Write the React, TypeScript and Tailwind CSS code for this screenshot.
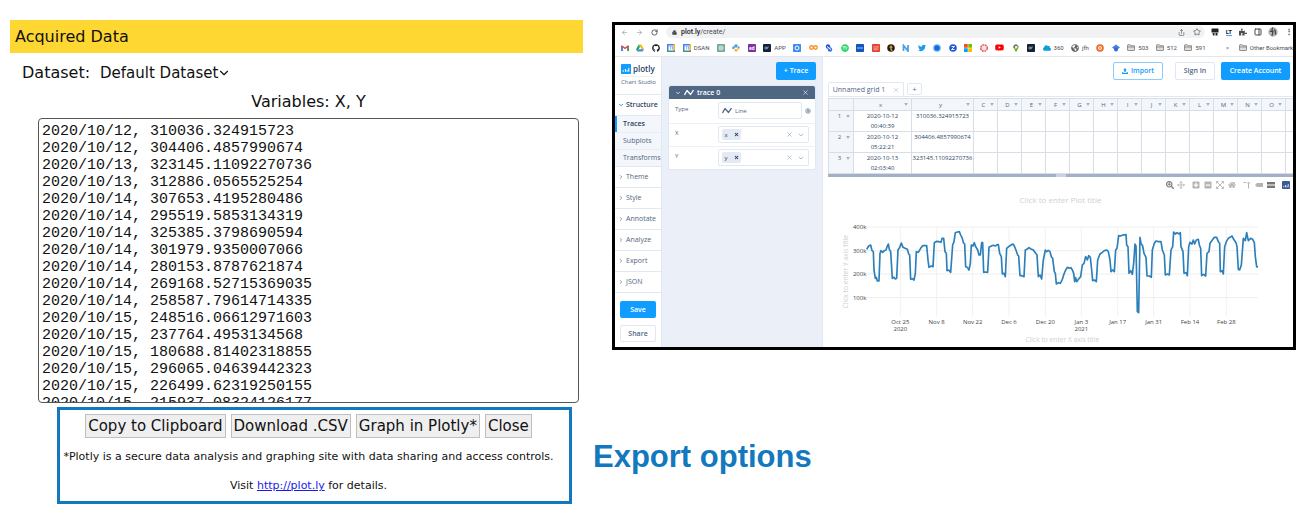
import type { ReactNode } from "react";
import { ChevronDown, ChevronRight, X, ArrowLeft, ArrowRight, RotateCw, Lock, Share, Star, Settings, Move, PanelRight } from "lucide-react";
import { FaGithub, FaSpotify, FaTwitter, FaYoutube, FaPython, FaPuzzlePiece, FaCloud, FaHome, FaSearchPlus, FaPlusSquare, FaMinusSquare, FaGlobeAmericas } from "react-icons/fa";

const rows = `2020/10/12, 310036.324915723
2020/10/12, 304406.4857990674
2020/10/13, 323145.11092270736
2020/10/13, 312886.0565525254
2020/10/14, 307653.4195280486
2020/10/14, 295519.5853134319
2020/10/14, 325385.3798690594
2020/10/14, 301979.9350007066
2020/10/14, 280153.8787621874
2020/10/14, 269168.52715369035
2020/10/14, 258587.79614714335
2020/10/15, 248516.06612971603
2020/10/15, 237764.4953134568
2020/10/15, 180688.81402318855
2020/10/15, 296065.04639442323
2020/10/15, 226499.62319250155
2020/10/15, 215937.08324126177`;

function Tile({ color, children }: { color: string; children?: ReactNode }) {
  return (
    <svg viewBox="0 0 16 16" className="size-2 shrink-0">
      <rect width="16" height="16" rx="1.5" fill={color} />
      {children}
    </svg>
  );
}

function Gmail() {
  return (
    <svg viewBox="0 0 16 16" className="size-2 shrink-0">
      <path d="M0 4v10h3.500V7L8 10.500 12.500 7v7H16V4l-2-1.500L8 7 2 2.500z" fill="#ea4335" />
      <path d="M0 4.500V14h3.500V7z" fill="#4285f4" />
      <path d="M16 4.500V14h-3.500V7z" fill="#34a853" />
    </svg>
  );
}

function Drive() {
  return (
    <svg viewBox="0 0 16 16" className="size-2 shrink-0">
      <path d="M5.500 1h5L16 10h-5z" fill="#fbbc04" />
      <path d="M5.500 1L8 5.500 2.700 15 0 10.500z" fill="#1fa463" />
      <path d="M5.500 10.500H16L13.300 15H2.700z" fill="#4285f4" />
    </svg>
  );
}

function Calendar() {
  return (
    <svg viewBox="0 0 16 16" className="size-2 shrink-0">
      <rect width="16" height="16" rx="1" fill="#3f7fee" />
      <path d="M13 0h2a1 1 0 0 1 1 1v12h-3z" fill="#fbbc04" />
      <path d="M0 13h13v3H1a1 1 0 0 1-1-1z" fill="#34a853" />
      <path d="M13 13h3l-3 3z" fill="#ea4335" />
      <rect x="3" y="3" width="10" height="10" fill="#fff" />
      <path d="M5 5h2.500v6M9 5h2v6" stroke="#3f7fee" strokeWidth="1.200" fill="none" />
    </svg>
  );
}

function Folder() {
  return (
    <svg viewBox="0 0 16 14" className="h-[7px] w-2 shrink-0" fill="#dedede" stroke="#7b7b7b" strokeWidth="1.600">
      <path d="M1 2.500V12a1 1 0 0 0 1 1h12a1 1 0 0 0 1-1V3.500H8L6.500 1.500H2a1 1 0 0 0-1 1zM1 6h14" />
    </svg>
  );
}

function Dot({ color, children }: { color: string; children?: ReactNode }) {
  return (
    <svg viewBox="0 0 16 16" className="size-2 shrink-0">
      <circle cx="8" cy="8" r="7.500" fill={color} />
      {children}
    </svg>
  );
}

function Bookmark({ icon, label }: { icon: ReactNode; label?: string }) {
  return (
    <a href="#" className="flex items-center gap-[3px] whitespace-nowrap">
      {icon}
      {label && <span>{label}</span>}
    </a>
  );
}

function AppTile() {
  return (
    <Tile color="#14213d">
      <path d="M4 6h3v4H4zM9 10V6h3" stroke="#b8c4dc" strokeWidth="1.200" fill="none" />
    </Tile>
  );
}

function Browser() {
  return (
    <header className="border-b border-[#e4e6e9] font-[Roboto,sans-serif] text-[#4a4d51]">
      <div className="flex h-[14px] items-center pl-1.5">
        <div className="flex w-[45px] shrink-0 items-center gap-2">
          <ArrowLeft className="size-[7px] text-[#a2a4a8]" strokeWidth={2.5} />
          <ArrowRight className="size-[7px] text-[#a2a4a8]" strokeWidth={2.5} />
          <RotateCw className="size-[7px]" strokeWidth={3} />
        </div>
        <div className="flex h-3 flex-1 items-center rounded-full bg-[#f1f2f4] pr-1 pl-1.5 text-[7px]">
          <Lock className="mr-1 size-[5px]" fill="currentColor" strokeWidth={3} />
          <span className="flex-1"><span className="font-medium text-[#202124]">plot.ly</span>/create/</span>
          <Share className="mr-2 size-[7px]" />
          <Star className="size-[8px]" />
        </div>
        <div className="flex w-[88px] shrink-0 items-center justify-between pl-1.5">
          <svg viewBox="0 0 16 16" className="size-2"><path d="M2 1h12a1 1 0 0 1 1 1v7H1V2a1 1 0 0 1 1-1zM3 10h4v5H4zM9 10h4v5H9z" fill="#222" /></svg>
          <span className="border-b border-[#44a3ff] text-[6px] leading-[6px] font-bold text-[#222]">LT</span>
          <FaPuzzlePiece className="size-2" />
          <PanelRight className="size-2" strokeWidth={3} />
          <svg viewBox="0 0 16 16" className="size-2.5"><circle cx="8" cy="8" r="7.500" fill="#b3b3b3" /><path d="M8 1c-5 4 3 7-2 13M10 4c4 3 0 6 3 8M3 7h6" stroke="#444" strokeWidth="2" fill="none" /></svg>
          <span className="text-[8px] font-bold">⋮</span>
        </div>
      </div>
      <nav aria-label="Bookmarks" className="flex h-[17px] items-center pl-1.5 text-[6px]">
        <div className="flex w-[585px] shrink-0 items-center justify-between">
          <Bookmark icon={<Gmail />} />
          <Bookmark icon={<Drive />} />
          <Bookmark icon={<FaGithub className="size-2 text-[#191919]" />} />
          <Bookmark icon={<Calendar />} />
          <Bookmark icon={<Calendar />} label="DSAN" />
          <Bookmark icon={<Tile color="#75ac9d"><circle cx="8" cy="8" r="4" fill="none" stroke="#fff" strokeWidth="1.500" /><path d="M5 5l6 6M11 5l-6 6" stroke="#fff" /></Tile>} />
          <Bookmark
            icon={
              <svg viewBox="0 0 16 16" className="size-2">
                <path d="M5 1h6v6H5v2H1V5h4z" fill="#4b96dc" />
                <path d="M11 15H5V10h6V7h4v4h-4z" fill="#f4b942" />
                <path d="M1 7h3v3H1zM12 5h3v3h-3z" fill="#4b96dc" />
              </svg>
            }
          />
          <Bookmark icon={<Tile color="#7b2fa0"><text x="2" y="12" fontSize="10" fontWeight="700" fill="#fff">ed</text></Tile>} />
          <Bookmark icon={<AppTile />} label="APP" />
          <Bookmark icon={<Tile color="#3d8bf2"><circle cx="8" cy="8" r="4" fill="none" stroke="#fff" strokeWidth="2" /></Tile>} />
          <Bookmark icon={<svg viewBox="0 0 18 16" className="size-[9px]"><g fill="none" stroke="#f5942b" strokeWidth="2.800"><circle cx="5" cy="8" r="3.500" /><circle cx="13" cy="8" r="3.500" /></g></svg>} />
          <Bookmark icon={<svg viewBox="0 0 16 16" className="size-2"><circle cx="6" cy="5" r="4.500" fill="#2456c9" /><circle cx="10" cy="11" r="4.500" fill="#3b6fe0" /><path d="M4 5l8 6" stroke="#fff" strokeWidth="2" /></svg>} />
          <Bookmark icon={<FaSpotify className="size-2 text-[#1ed760]" />} />
          <Bookmark icon={<Tile color="#1356b8"><path d="M2 8h12" stroke="#9bc8ff" strokeWidth="2" /></Tile>} />
          <Bookmark icon={<Tile color="#e44332"><path d="M3 5l4 1 6-2M3 8l4 1 6-2M3 11l4 1 6-2" stroke="#fff" fill="none" /></Tile>} />
          <Bookmark icon={<Dot color="#1d1d1b"><path d="M8 3v8q0 2 3 1M5 6h6" stroke="#f7a823" strokeWidth="2.500" fill="none" /></Dot>} />
          <Bookmark icon={<svg viewBox="0 0 16 16" className="size-2"><path d="M3 14V3l9 11V2" stroke="#4aa0e6" strokeWidth="3.500" fill="none" /></svg>} />
          <Bookmark icon={<FaTwitter className="size-2 text-[#1d9bf0]" />} />
          <Bookmark icon={<Dot color="#5aa9f7"><circle cx="8" cy="8" r="5" fill="#1668d8" /></Dot>} />
          <Bookmark icon={<Dot color="#2057d8"><path d="M5 5h6l-6 6h6" stroke="#fff" strokeWidth="1.800" fill="none" /></Dot>} />
          <Bookmark icon={<svg viewBox="0 0 16 16" className="size-2"><path d="M0 0h7.500v7.500H0z" fill="#f25022" /><path d="M8.500 0H16v7.500H8.500z" fill="#7fba00" /><path d="M0 8.500h7.500V16H0z" fill="#00a4ef" /><path d="M8.500 8.500H16V16H8.500z" fill="#ffb900" /></svg>} />
          <Bookmark icon={<svg viewBox="0 0 16 16" className="size-2"><circle cx="8" cy="8" r="6.500" fill="none" stroke="#e2352b" strokeWidth="2.500" strokeDasharray="4 1.200" /><circle cx="8" cy="8" r="3" fill="none" stroke="#f3a5a0" /></svg>} />
          <Bookmark icon={<FaYoutube className="size-[9px] text-[#f00]" />} />
          <Bookmark icon={<svg viewBox="0 0 16 16" className="size-2"><path d="M8 16L4 9a5 5 0 1 1 8 0z" fill="#34a853" /><path d="M3 6a5 5 0 0 1 7-5L5 8z" fill="#4285f4" /><path d="M3 6l3-4 2 3-4 4z" fill="#ea4335" /><path d="M4 9l6-5 2 4-6 3z" fill="#fbbc04" /><circle cx="8" cy="6" r="2" fill="#fff" /></svg>} />
          <Bookmark icon={<AppTile />} />
          <Bookmark icon={<FaCloud className="size-2 text-[#0d9dda]" />} label="360" />
          <Bookmark icon={<FaGlobeAmericas className="size-2 text-[#5f6368]" />} label="jfh" />
          <Bookmark icon={<Dot color="#f26b21"><circle cx="8" cy="8" r="3" fill="none" stroke="#fff" strokeWidth="2" /></Dot>} />
          <Bookmark icon={<svg viewBox="0 0 16 16" className="size-2"><path d="M8 1l8 6-8 6-8-6z" fill="#4480f0" /><circle cx="8" cy="11" r="4" fill="#3367d6" /></svg>} />
          <Bookmark icon={<Folder />} label="503" />
          <Bookmark icon={<Folder />} label="512" />
          <Bookmark icon={<Folder />} label="591" />
        </div>
        <div className="ml-auto flex w-[67px] shrink-0 items-center gap-[5px]">
          <span>»</span>
          <span className="h-2 w-px bg-[#d5d7da]" />
          <Bookmark icon={<Folder />} label="Other Bookmarks" />
        </div>
      </nav>
    </header>
  );
}

function PlotlyMark({ className }: { className: string }) {
  return (
    <svg viewBox="0 0 18 18" className={className}>
      <rect width="18" height="18" rx="1" fill="currentColor" />
      <path d="M4 14v-3M8 14V9M11 14v-3M14 14V7" stroke="#fff" strokeWidth="1.800" />
    </svg>
  );
}

function SideItem({ label }: { label: string }) {
  return (
    <button className="flex h-[21px] w-full items-center gap-0.5 border-b border-[#dfe8f3] pl-[3px] text-left">
      <ChevronRight className="size-[6px]" strokeWidth={2.5} />
      {label}
    </button>
  );
}

function Sidebar() {
  return (
    <aside className="w-[47px] shrink-0 border-r border-[#dfe8f3] text-[7px] leading-[10px] text-[#506784]">
      <div className="flex h-[38px] flex-col justify-center border-b border-[#dfe8f3] pl-1.5">
        <div className="flex items-center gap-0.5">
          <PlotlyMark className="size-[10px] text-[#119dff]" />
          <span className="text-[8px] font-semibold text-[#2a3f5f]">plotly</span>
        </div>
        <div className="mt-0.5 mr-1.5 border-t border-[#eef2f7] pt-px text-[6px] leading-[9px] whitespace-nowrap">Chart Studio</div>
      </div>
      <button className="flex h-[21px] w-full items-center gap-0.5 border-b border-[#dfe8f3] pl-[3px] font-semibold text-[#2a3f5f]">
        <ChevronDown className="size-[6px] text-[#119dff]" strokeWidth={4} />
        Structure
      </button>
      <div className="flex h-[51px] flex-col border-b border-[#dfe8f3] bg-[#f3f6fa]">
        <button className="flex-1 border-l-2 border-[#119dff] pl-1.5 text-left font-semibold text-[#2a3f5f]">Traces</button>
        <button className="flex-1 border-y border-[#e6edf5] pl-2 text-left">Subplots</button>
        <button className="flex-1 pl-2 text-left">Transforms</button>
      </div>
      <SideItem label="Theme" />
      <SideItem label="Style" />
      <SideItem label="Annotate" />
      <SideItem label="Analyze" />
      <SideItem label="Export" />
      <SideItem label="JSON" />
      <div className="flex flex-col gap-[7px] px-[5px] pt-2 pb-[5px] font-semibold">
        <button className="h-[17px] rounded-xs bg-[#119dff] text-white">Save</button>
        <button className="h-[17px] rounded-xs border border-[#dfe8f3]">Share</button>
      </div>
    </aside>
  );
}

function LineIcon() {
  return (
    <svg viewBox="0 0 20 14" className="h-[7px] w-2.5 shrink-0" fill="none" stroke="currentColor" strokeWidth="2.600">
      <path d="M1 12L6 3l7 8 6-9" strokeLinejoin="round" />
    </svg>
  );
}

function AxisField({ label, value }: { label: string; value: string }) {
  return (
    <div className="flex h-[23px] border-t border-[#edf1f7] pt-[2px] pr-1.5 pl-1.5">
      <span className="w-[43px] pt-0.5 text-[6px]">{label}</span>
      <div className="flex h-[17px] flex-1 items-center gap-1 rounded-xs border border-[#dfe8f3] px-[3px]">
        <button aria-label={"Remove " + value} className="flex h-[11px] w-[19px] items-center justify-center gap-1.5 rounded-xs bg-[#e3eaf4] text-[6px] text-[#2a3f5f]">
          {value}
          <X className="size-[5px]" strokeWidth={5} />
        </button>
        <X className="ml-auto size-[7px] text-[#a2b1c6]" strokeWidth={2.5} />
        <ChevronDown className="size-2 text-[#a2b1c6]" strokeWidth={2.5} />
      </div>
    </div>
  );
}

function TracePanel() {
  return (
    <section className="flex w-[161px] shrink-0 flex-col border-r border-[#dfe8f3] bg-[#ebf0f8] px-1.5 pt-[5px] text-[7px] leading-[10px] text-[#506784]">
      <button className="h-[18px] w-10 self-end rounded-xs bg-[#119dff] font-semibold text-white">+ Trace</button>
      <div className="mt-[5px] rounded-xs border border-[#dfe8f3] bg-white">
        <div className="flex h-[13px] items-center gap-[3px] rounded-t-xs bg-[#506784] px-1.5 font-semibold text-white">
          <ChevronDown className="size-[6px]" strokeWidth={3} />
          <LineIcon />
          trace 0
          <X className="ml-auto size-[7px]" />
        </div>
        <div className="flex h-6 pt-[3px] pr-1 pl-1.5">
          <span className="w-[43px] pt-0.5 text-[6px]">Type</span>
          <div className="flex h-[17px] flex-1 items-center gap-[3px] rounded-xs border border-[#dfe8f3] px-[3px] text-[6px]">
            <LineIcon />
            Line
          </div>
          <Settings className="mt-1.5 ml-[3px] size-[6px] text-[#7f92ab]" strokeWidth={4} />
        </div>
        <AxisField label="X" value="x" />
        <AxisField label="Y" value="y" />
      </div>
    </section>
  );
}

const letters = ["C", "D", "E", "F", "G", "H", "I", "J", "K", "L", "M", "N", "O"];
const records = [
  ["2020-10-12", "00:40:39", "310036.324915723"],
  ["2020-10-12", "05:22:21", "304406.4857990674"],
  ["2020-10-13", "02:03:40", "323145.11092270736"],
];

function Caret() {
  return (
    <svg viewBox="0 0 6 5" className="h-[3px] w-1 shrink-0">
      <path d="M0 0h6L3 5z" fill="#a2b1c6" />
    </svg>
  );
}

function HeadCell({ name }: { name: string }) {
  return (
    <th className="border border-[#d9dee6] p-0 font-normal">
      <div className="flex items-center px-[3px]">
        <span className="flex-1 text-center">{name}</span>
        <Caret />
      </div>
    </th>
  );
}

function Grid() {
  return (
    <div className="overflow-hidden">
      <table className="w-full table-fixed border-collapse text-[6px] leading-[10px] text-[#2a3f5f]">
        <colgroup>
          <col className="w-[25px]" />
          <col className="w-[58px]" />
          <col className="w-[62px]" />
          {letters.map((l) => <col key={l} className="w-[24px]" />)}
          <col />
        </colgroup>
        <thead>
          <tr className="h-3 bg-[#f3f6fa] text-[#506784]">
            <th className="border border-[#d9dee6] p-0" />
            <HeadCell name="x" />
            <HeadCell name="y" />
            {letters.map((l) => <HeadCell key={l} name={l} />)}
            <th className="border border-r-0 border-[#d9dee6] p-0" />
          </tr>
        </thead>
        <tbody>
          {records.map(([day, time, value], i) => (
            <tr key={value} className="align-top">
              <th className="border border-[#d9dee6] bg-[#f3f6fa] p-0 font-normal text-[#506784]">
                <div className="flex items-center pr-[3px] pl-1"><span className="flex-1">{i + 1}</span><Caret /></div>
              </th>
              <td className="border border-[#d9dee6] p-0 text-center">{day}<br />{time}</td>
              <td className="border border-[#d9dee6] p-0 text-center whitespace-nowrap">{value}</td>
              {letters.map((l) => <td key={l} className="border border-[#d9dee6] p-0" />)}
              <td className="border border-r-0 border-[#d9dee6] p-0" />
            </tr>
          ))}
        </tbody>
      </table>
      <div className="flex h-[3px] justify-center bg-[#a2b1c6]"><span className="w-2.5 bg-[#c8d4e3]" /></div>
    </div>
  );
}

const ticks = [
  [211, "Oct 25", "2020"], [320, "Nov 8"], [428, "Nov 22"], [537, "Dec 6"], [646, "Dec 20"],
  [754, "Jan 3", "2021"], [863, "Jan 17"], [971, "Jan 31"], [1080, "Feb 14"], [1189, "Feb 28"],
] as [number, string, string?][];

const series =
  "110,118 116,108 122,105 126,122 130,125 132,180 136,205 139,202 142,213 147,213 150,130 153,122 158,127 163,122 168,120 172,108 175,102 178,118 182,125 187,205 192,202 196,207 200,205 204,120 209,112 214,99 219,112 225,115 232,118 236,132 239,135 242,208 247,206 252,210 256,190 259,125 265,127 272,115 278,107 290,107 294,150 297,172 304,168 309,170 313,98 320,94 327,95 333,97 336,85 341,85 345,125 349,130 351,182 356,180 362,187 368,105 372,95 376,68 382,66 388,65 392,75 397,85 400,98 404,102 407,170 412,172 417,180 421,160 424,105 429,108 433,98 437,110 443,120 447,135 451,135 455,98 458,98 461,187 467,186 473,187 477,112 484,108 490,106 496,108 502,104 505,104 509,130 514,140 517,192 522,190 526,200 530,115 536,110 543,105 549,102 553,108 557,118 563,135 566,138 570,197 575,197 582,200 586,120 592,117 597,113 603,117 610,120 617,130 621,135 625,200 630,195 635,207 640,150 646,120 650,125 655,121 660,125 664,140 668,145 673,185 676,190 679,222 685,218 691,220 697,208 702,192 707,180 712,172 718,175 723,173 728,182 731,190 734,215 737,203 740,215 746,207 752,200 757,165 762,160 767,140 772,150 776,137 781,142 785,180 788,212 793,210 799,215 803,150 810,132 817,127 823,122 830,120 835,125 840,150 843,185 848,180 853,185 857,120 861,115 866,77 872,78 878,75 888,74 890,105 894,110 897,190 902,182 907,193 911,160 915,102 918,108 922,305 926,308 930,82 933,100 938,108 942,130 948,142 951,198 958,198 964,202 967,120 973,100 978,93 985,95 993,95 997,120 1003,135 1006,195 1012,192 1018,195 1023,120 1028,110 1031,66 1036,72 1041,68 1047,72 1051,68 1053,110 1059,125 1062,190 1068,188 1072,197 1076,110 1080,97 1086,102 1090,90 1094,102 1099,90 1105,88 1108,105 1112,115 1115,197 1121,193 1127,198 1131,130 1137,125 1140,100 1147,90 1153,82 1160,82 1165,95 1169,100 1171,185 1176,182 1180,192 1184,110 1189,95 1195,85 1200,82 1206,78 1211,88 1218,98 1221,110 1225,178 1229,180 1234,165 1240,85 1246,92 1250,68 1255,92 1262,85 1268,88 1273,98 1276,140 1280,170 1284,172";

function Chart() {
  return (
    <svg viewBox="0 0 1386 411" className="mt-[5px] ml-0.5 h-[137px] w-[462px]" fontSize="18" fill="#444">
      {[51, 122, 192, 263].map((y, i) => (
        <g key={y}>
          <path d={`M110 ${y}H1284`} stroke="#eee" strokeWidth="3" />
          <text x="109" y={y + 6} textAnchor="end">{400 - i * 100}k</text>
        </g>
      ))}
      {ticks.map(([x, label, year]) => (
        <g key={x} textAnchor="middle">
          <path d={`M${x} 51V320`} stroke="#f1f1f1" strokeWidth="3" />
          <text x={x} y="342">{label}</text>
          {year && <text x={x} y="364">{year}</text>}
        </g>
      ))}
      <polyline points={series} fill="none" stroke="#2b80bb" strokeWidth="5" strokeLinejoin="round" />
      <g fontSize="20" fill="#d0d0d0" textAnchor="middle">
        <text x="697" y="397">Click to enter X axis title</text>
        <text transform="translate(55 185) rotate(-90)">Click to enter Y axis title</text>
      </g>
    </svg>
  );
}

function Workspace() {
  return (
    <main className="min-w-0 flex-1 pl-[5px] text-[7px] leading-[10px] text-[#506784]">
      <div className="flex justify-end pt-[5px] pr-[3px] font-semibold">
        <button className="mr-3 flex h-[18px] w-[50px] items-center justify-center gap-[3px] rounded-xs border border-[#8ccdff] text-[#119dff]">
          <svg viewBox="0 0 16 16" className="size-[6px]"><path d="M8 0l5 6h-3v5H6V6H3zM0 11h4v2h8v-2h4v5H0z" fill="currentColor" /></svg>
          Import
        </button>
        <button className="mr-1.5 h-[18px] w-10 rounded-xs border border-[#dfe8f3]">Sign In</button>
        <button className="h-[18px] w-[69px] rounded-xs bg-[#119dff] text-white">Create Account</button>
      </div>
      <div className="mt-[3px] flex h-[14px] items-end border-b border-[#dfe8f3]">
        <button className="flex h-[14px] w-[76px] items-center justify-center gap-2 rounded-t-xs border border-b-0 border-[#dfe8f3]">
          Unnamed grid 1
          <X className="size-[6px] text-[#a2b1c6]" />
        </button>
        <button aria-label="Add grid" className="mb-px ml-[3px] h-3 w-[15px] rounded-xs border border-[#dfe8f3] leading-none">+</button>
      </div>
      <div className="pt-px"><Grid /></div>
      <div className="mt-0.5 flex h-3 items-center justify-end gap-[3px] pr-[3px] text-[#b4b4b4]">
        <FaSearchPlus className="size-2 text-[#777]" />
        <Move className="mr-1 size-2" strokeWidth={2.5} />
        <FaPlusSquare className="mr-px size-2" />
        <FaMinusSquare className="mr-px size-2" />
        <svg viewBox="0 0 16 16" className="mr-px size-2"><path d="M1 5V1h4M11 1h4v4M15 11v4h-4M5 15H1v-4M1 1l14 14M15 1L1 15" stroke="currentColor" strokeWidth="1.800" fill="none" /></svg>
        <FaHome className="mr-1 size-2" />
        <svg viewBox="0 0 16 16" className="mr-px size-2"><path d="M1 3h5M11 15V3M8 5l3-3 3 3" stroke="currentColor" strokeWidth="2" fill="none" /></svg>
        <svg viewBox="0 0 16 16" className="mr-px size-2"><path d="M0 8l4-4h12v8H4z" fill="currentColor" /></svg>
        <svg viewBox="0 0 16 16" className="size-2"><path d="M0 2h16v5H0zM0 9h16v5H0z" fill="#777" /></svg>
        <PlotlyMark className="ml-1 size-2 text-[#3f5a93]" />
      </div>
      <h2 className="mt-1 text-center text-[8px] font-normal text-[#d0d0d0]">Click to enter Plot title</h2>
      <Chart />
    </main>
  );
}

function ActionButton({ children }: { children: ReactNode }) {
  return <button className="h-6 border border-[#bfbfbf] bg-[#efefef] px-0.5 text-[15px] leading-5">{children}</button>;
}

export default function App() {
  return (
    <div className="flex items-start bg-white pt-5 pr-3 pl-2.5 font-['DejaVu_Sans',sans-serif] text-[#111]">
      <section className="w-[573px] shrink-0">
        <h1 className="bg-[#ffd732] pl-[5px] text-[16px] leading-[33px]">Acquired Data</h1>
        <div className="mt-2 flex h-6 items-center gap-2.5 pl-3 text-[16px]">
          <label htmlFor="dataset">Dataset:</label>
          <div className="relative flex items-center">
            <select id="dataset" className="appearance-none bg-transparent pr-3 text-[15px]">
              <option>Default Dataset</option>
            </select>
            <ChevronDown className="pointer-events-none absolute right-0 size-3.5" strokeWidth={2} />
          </div>
        </div>
        <div className="mr-1 ml-7">
          <label htmlFor="values" className="mt-[5px] block text-center text-[16px] leading-6">Variables: X, Y</label>
          <textarea
            id="values"
            readOnly
            value={rows}
            className="mt-1 block h-[285px] w-full resize-none overflow-hidden rounded-sm border border-[#555] px-[3px] pt-[4px] font-['Liberation_Mono',monospace] text-[15px] leading-[17px]"
          />
        </div>
        <div className="mt-1 mr-[11px] ml-[47px] h-[97px] border-3 border-[#1378bd] pt-1">
          <div className="flex justify-center gap-[5px] pr-3 whitespace-nowrap">
            <ActionButton>Copy to Clipboard</ActionButton>
            <ActionButton>Download .CSV</ActionButton>
            <ActionButton>Graph in Plotly*</ActionButton>
            <ActionButton>Close</ActionButton>
          </div>
          <p className="mt-[11px] pr-3 text-center text-[11px] leading-4 whitespace-nowrap">*Plotly is a secure data analysis and graphing site with data sharing and access controls.</p>
          <p className="mt-[13px] pr-3 text-center text-[11px] leading-4">
            Visit <a href="http://plot.ly" className="text-[#1a1aee] underline">http://plot.ly</a> for details.
          </p>
        </div>
      </section>
      <section className="min-w-0 flex-1 pt-0.5 pl-2.5">
        <div className="ml-[19px] overflow-hidden border-3 border-black font-['Open_Sans',sans-serif]">
          <Browser />
          <div className="flex">
            <Sidebar />
            <TracePanel />
            <Workspace />
          </div>
        </div>
        <h2 className="mt-[87px] font-['Liberation_Sans',sans-serif] text-[31px] leading-10 font-bold text-[#1378bd]">Export options</h2>
      </section>
    </div>
  );
}
